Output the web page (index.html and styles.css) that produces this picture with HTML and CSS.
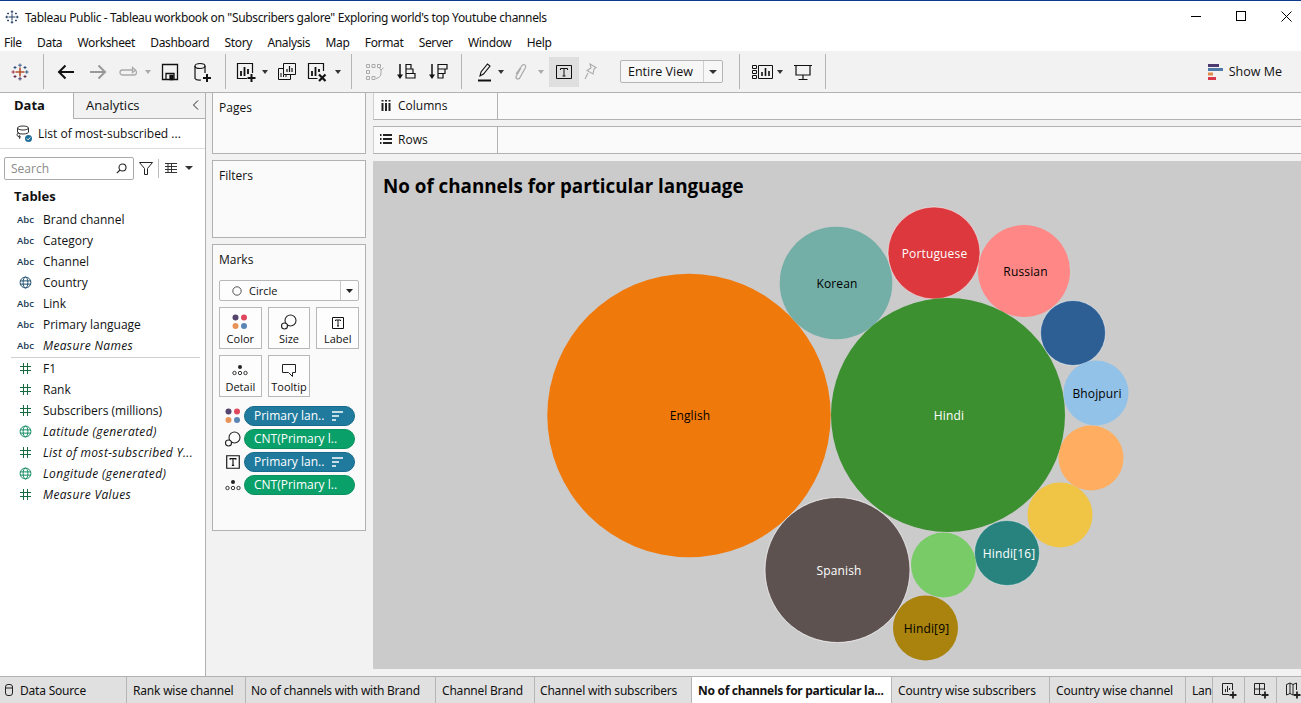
FILE: index.html
```html
<!DOCTYPE html>
<html lang="en">
<head>
<meta charset="utf-8">
<title>Tableau Public</title>
<link rel="stylesheet" href="styles.css">
</head>
<body>
<div class="app">
  <header class="titlebar">
    <svg class="title-logo" width="14" height="16" viewBox="0 0 16 16" fill="none" stroke="#1f3a5f" stroke-width="1.100"><path d="M8 4v8M4 8h8M8 0.500v3M6.500 2h3M8 12.500v3M6.500 14h3M0.500 8h3M2 6.500v3M12.500 8h3M14 6.500v3M3.500 3v2M2.500 4h2M12.500 3v2M11.500 4h2M3.500 11v2M2.500 12h2M12.500 11v2M11.500 12h2"/></svg>
    <span class="title-text">Tableau Public - Tableau workbook on "Subscribers galore" Exploring world's top Youtube channels</span>
    <div class="win-controls">
      <svg width="10" height="10" viewBox="0 0 10 10"><path d="M0 5.500h10" stroke="#000"/></svg>
      <svg width="10" height="10" viewBox="0 0 10 10"><rect x=".5" y=".5" width="9" height="9" fill="none" stroke="#000"/></svg>
      <svg width="11" height="11" viewBox="0 0 11 11"><path d="M.5.500l10 10M10.500.500l-10 10" stroke="#000"/></svg>
    </div>
  </header>
  <nav class="menubar">
    <span>File</span><span>Data</span><span>Worksheet</span><span>Dashboard</span><span>Story</span><span>Analysis</span><span>Map</span><span>Format</span><span>Server</span><span>Window</span><span>Help</span>
  </nav>
  <div class="toolbar">
    <div class="tb-group g-logo">
      <svg width="18" height="18" viewBox="0 0 18 18" fill="none" stroke-width="1"><path d="M9 4.500v9M4.500 9h9" stroke="#b5502d" stroke-width="1.600"/><path d="M9 .5v3.500M7.200 2.200h3.600" stroke="#3f5f8a"/><path d="M9 14v3.500M7.200 15.800h3.600" stroke="#4a3a6a"/><path d="M.5 9H4M2.200 7.200v3.600" stroke="#a03a4f"/><path d="M14 9h3.500M15.800 7.200v3.600" stroke="#2f5f80"/><path d="M4 3v3M2.500 4.500h3M14 3v3M12.500 4.500h3" stroke="#2f4f7a"/><path d="M4 12v3M2.500 13.500h3M14 12v3M12.500 13.500h3" stroke="#6a2f4f"/></svg>
    </div>
    <div class="tb-group g-file">
      <svg class="ico" viewBox="0 0 20 20" fill="none" stroke="#111" stroke-width="2"><path d="M18 10H3M9.500 3.500L3 10l6.500 6.500"/></svg>
      <svg class="ico m12" viewBox="0 0 20 20" fill="none" stroke="#999" stroke-width="2"><path d="M2 10h15M10.500 3.500L17 10l-6.500 6.500"/></svg>
      <svg class="ico m10" viewBox="0 0 20 20" fill="none" stroke="#aaa" stroke-width="1.300"><path d="M15 8H4.500a2.500 2.500 0 0 0 0 5H16a2.500 2.500 0 0 0 1-4.800M14.500 5.500L17.500 8l-3 2.500z"/></svg>
      <svg class="caret m6" viewBox="0 0 8 4"><path d="M1 0h6L4 4z" fill="#aaa"/></svg>
      <svg class="ico m8" viewBox="0 0 20 20" fill="none" stroke="#111" stroke-width="1.300"><path d="M2.500 2.500h15v15h-15zM6 17.500v-6h8v6"/><path d="M10 13.500h3v4h-3z" fill="#111"/></svg>
      <svg class="ico m12" viewBox="0 0 20 20" fill="none" stroke="#111" stroke-width="1.200"><ellipse cx="8" cy="4" rx="5" ry="2.500"/><path d="M3 4v12.500a5 2 0 0 0 6 1.500M13 4v7"/><path d="M11 16h8M15 12v8" stroke-width="2"/></svg>
    </div>
    <div class="tb-group g-sheet">
      <svg class="ico" viewBox="0 0 20 20" fill="none" stroke="#111" stroke-width="1.200"><path d="M11 16.500H1.500v-15h15V11"/><path d="M5 14V9M8.500 14V5M12 12V7" stroke-width="1.800"/><path d="M11.500 16h8M15.500 12v8" stroke-width="2"/></svg>
      <svg class="caret m5" viewBox="0 0 8 4"><path d="M1 0h6L4 4z" fill="#333"/></svg>
      <svg class="ico m8" viewBox="0 0 20 20" fill="none" stroke="#111" stroke-width="1"><path d="M6.500 1.500h12v11h-12z"/><path d="M10 10V7M12.500 10V4M15 10V6" stroke-width="1.200"/><path d="M6.500 6.500H1.500v11h12v-5M4 15v-4M6.500 15v-2M9 15v-2"/></svg>
      <svg class="ico m10" viewBox="0 0 20 20" fill="none" stroke="#111" stroke-width="1.200"><path d="M10.500 16.500h-9v-15h15V9"/><path d="M5 14V9M8.500 14V5M12 10V7" stroke-width="1.800"/><path d="M12 12.500l6.500 6.500M18.500 12.500L12 19" stroke-width="2.200"/></svg>
      <svg class="caret m7" viewBox="0 0 8 4"><path d="M1 0h6L4 4z" fill="#333"/></svg>
    </div>
    <div class="tb-group g-sort">
      <svg class="ico" viewBox="0 0 20 20" fill="none" stroke="#aaa" stroke-width="1"><path d="M1.500 2.500h3v3h-3zM7 2.500h3v3H7zM12.500 2.500h3v3h-3zM1.500 8.500h3v3h-3zM1.500 14.500h3v3h-3zM7 14.500h3v3H7zM16 8v3c0 3-2 5-5 5.500M14 5.500l2 2.500 2.500-2"/></svg>
      <svg class="ico m11" viewBox="0 0 20 20" fill="none" stroke="#111" stroke-width="1.200"><path d="M4 2v13" stroke-width="1.500"/><path d="M1 12.500h6L4 17z" fill="#111" stroke="none"/><path d="M10 2.500h5v4.500h-5zM10 7h7v4.500h-7zM10 11.500h9V16h-9z"/></svg>
      <svg class="ico m12" viewBox="0 0 20 20" fill="none" stroke="#111" stroke-width="1.200"><path d="M4 2v13" stroke-width="1.500"/><path d="M1 12.500h6L4 17z" fill="#111" stroke="none"/><path d="M10 2.500h9v4.500h-9zM10 7h7v4.500h-7zM10 11.500h5V16h-5z"/></svg>
    </div>
    <div class="tb-group g-format">
      <svg class="ico" viewBox="0 0 20 20" fill="none" stroke="#111" stroke-width="1.100"><path d="M5 14l1-4 6.500-8 2.500 2-6.500 8z"/><path d="M3 18.500h13" stroke-width="2"/></svg>
      <svg class="caret m2" viewBox="0 0 8 4"><path d="M1 0h6L4 4z" fill="#333"/></svg>
      <svg class="ico m6" viewBox="0 0 20 20" fill="none" stroke="#aaa" stroke-width="1.200"><path d="M5 12l6-8.500c1.500-2 4.500-.5 3.500 2L9 15.500c-1 2.500-4.500 1.500-4-1L10 6"/></svg>
      <svg class="caret m6" viewBox="0 0 8 4"><path d="M1 0h6L4 4z" fill="#aaa"/></svg>
      <span class="tb-toggle"><svg width="18" height="18" viewBox="0 0 18 18" fill="none"><path d="M1.500 2.500h15v13h-15z" stroke="#111"/><path d="M5.500 7V5.500h7V7M9 5.500v7.500M7.500 13h3" stroke="#111"/></svg></span>
      <svg class="ico m2" viewBox="0 0 20 20" fill="none" stroke="#aaa" stroke-width="1.100"><path d="M9 2l6 3.500-2 1.500-1 5-6-3.500 4-2.500zM7 11l-3 6"/></svg>
    </div>
    <div class="tb-group g-view">
      <div class="fit-select"><span class="fit-label">Entire View</span><span class="fit-arrow"><svg width="8" height="4" viewBox="0 0 8 4"><path d="M0 0h8L4 4z" fill="#333"/></svg></span></div>
    </div>
    <div class="tb-group g-show">
      <svg class="ico-wide" viewBox="0 0 21 16" fill="none" stroke="#111" stroke-width="1"><path d="M.5 1.500h4v3h-4zM.5 6.500h4v3h-4zM.5 11.500h4v3h-4zM6.500 1.500h14v13h-14z"/><path d="M10 12V8M13.500 12V4M17 12V7" stroke-width="1.600"/></svg>
      <svg class="caret m3" viewBox="0 0 8 4"><path d="M1 0h6L4 4z" fill="#333"/></svg>
      <svg class="ico m9" viewBox="0 0 20 20" fill="none" stroke="#111" stroke-width="1.200"><path d="M1 3.500h18M3 3.500v9.500h14V3.500M10 13v4M5.500 17.500h9"/></svg>
    </div>
    <div class="showme">
      <svg width="15" height="16" viewBox="0 0 15 16"><rect y="0" width="11" height="3" fill="#4c3a6e"/><rect y="4" width="15" height="3" fill="#4f7aa8"/><rect y="8.500" width="5" height="3" fill="#e08a4a"/><rect y="13" width="8" height="3" fill="#d9384a"/></svg>
      <span>Show Me</span>
    </div>
  </div>

  <main class="workspace">
    <aside class="datapane">
      <div class="pane-tabs">
        <div class="pane-tab active">Data</div>
        <div class="pane-tab">Analytics<svg class="collapse" width="7" height="10" viewBox="0 0 7 10"><path d="M6 .5L1.500 5 6 9.500" fill="none" stroke="#222"/></svg></div>
      </div>
      <div class="source">
        <svg width="17" height="18" viewBox="0 0 17 18" fill="none" stroke="#333" stroke-width="1"><ellipse cx="7" cy="3" rx="5.500" ry="2"/><path d="M1.500 3v4c0 1 2 2 5.500 2s5.500-1 5.500-2V3M3 7.500C1.500 8 1 9 1 10c0 1 1.500 1.800 4 2M4 9.500c-1 .5-1 4 0 4.500"/><circle cx="12.500" cy="13.500" r="3.500" fill="#1f6f99" stroke="none"/><path d="M10.800 13.500l1.300 1.300 2.200-2.400" stroke="#fff"/></svg>
        <span>List of most-subscribed ...</span>
      </div>
      <div class="search-row">
        <div class="search"><span>Search</span><svg width="11" height="11" viewBox="0 0 11 11" fill="none" stroke="#222" stroke-width="1.100"><circle cx="6.500" cy="4.500" r="3.500"/><path d="M4 7L.8 10.200"/></svg></div>
        <svg width="14" height="13" viewBox="0 0 14 13" fill="none" stroke="#222"><path d="M.5.500h13L8.500 6.500v6h-3v-6z"/></svg>
        <i class="search-sep"></i>
        <svg width="12" height="10" viewBox="0 0 12 10" fill="none" stroke="#333"><path d="M0 .5h12M0 3.500h12M0 6.500h12M0 9.500h12M3 0v10M6.500 0v10"/></svg>
        <svg class="list-caret" width="8" height="4" viewBox="0 0 8 4"><path d="M0 0h8L4 4z" fill="#333"/></svg>
      </div>
      <div class="tables-head">Tables</div>
      <ul class="fields">
        <li><b class="abc">Abc</b><span>Brand channel</span></li>
        <li><b class="abc">Abc</b><span>Category</span></li>
        <li><b class="abc">Abc</b><span>Channel</span></li>
        <li><svg class="globe navy" viewBox="0 0 12 12"><circle cx="6" cy="6" r="5"/><ellipse cx="6" cy="6" rx="2.200" ry="5"/><path d="M1 4.500h10M1 7.500h10"/></svg><span>Country</span></li>
        <li><b class="abc">Abc</b><span>Link</span></li>
        <li><b class="abc">Abc</b><span>Primary language</span></li>
        <li><b class="abc">Abc</b><em>Measure Names</em></li>
        <li class="divider" aria-hidden="true"></li>
        <li><svg class="hash" viewBox="0 0 11 11"><path d="M3.500 0v11M7.500 0v11M0 3.500h11M0 7.500h11"/></svg><span>F1</span></li>
        <li><svg class="hash" viewBox="0 0 11 11"><path d="M3.500 0v11M7.500 0v11M0 3.500h11M0 7.500h11"/></svg><span>Rank</span></li>
        <li><svg class="hash" viewBox="0 0 11 11"><path d="M3.500 0v11M7.500 0v11M0 3.500h11M0 7.500h11"/></svg><span>Subscribers (millions)</span></li>
        <li><svg class="globe green" viewBox="0 0 12 12"><circle cx="6" cy="6" r="5"/><ellipse cx="6" cy="6" rx="2.200" ry="5"/><path d="M1 4.500h10M1 7.500h10"/></svg><em>Latitude (generated)</em></li>
        <li><svg class="hash" viewBox="0 0 11 11"><path d="M3.500 0v11M7.500 0v11M0 3.500h11M0 7.500h11"/></svg><em>List of most-subscribed Y...</em></li>
        <li><svg class="globe green" viewBox="0 0 12 12"><circle cx="6" cy="6" r="5"/><ellipse cx="6" cy="6" rx="2.200" ry="5"/><path d="M1 4.500h10M1 7.500h10"/></svg><em>Longitude (generated)</em></li>
        <li><svg class="hash" viewBox="0 0 11 11"><path d="M3.500 0v11M7.500 0v11M0 3.500h11M0 7.500h11"/></svg><em>Measure Values</em></li>
      </ul>
    </aside>

    <section class="cards">
      <div class="card pages"><h3>Pages</h3></div>
      <div class="card filters"><h3>Filters</h3></div>
      <div class="card marks">
        <h3>Marks</h3>
        <div class="mark-type">
          <svg width="10" height="10" viewBox="0 0 10 10"><circle cx="5" cy="5" r="4.200" fill="none" stroke="#555"/></svg>
          <span class="mark-type-name">Circle</span>
          <span class="mark-type-arrow"><svg width="7" height="4" viewBox="0 0 7 4"><path d="M0 0h7L3.500 4z" fill="#222"/></svg></span>
        </div>
        <div class="mark-grid">
          <div class="mark-btn"><svg width="16" height="16" viewBox="0 0 16 16"><circle cx="3.500" cy="3.500" r="3" fill="#55446e"/><circle cx="12" cy="3.500" r="3" fill="#e0475e"/><circle cx="3.500" cy="12" r="3" fill="#e8935a"/><circle cx="12" cy="12" r="3" fill="#5b85b5"/></svg><span>Color</span></div>
          <div class="mark-btn"><svg width="16" height="16" viewBox="0 0 16 16" fill="none" stroke="#222" stroke-width="1.100"><circle cx="9.500" cy="6.500" r="5.500"/><circle cx="3.500" cy="12" r="3" fill="#fafafa"/></svg><span>Size</span></div>
          <div class="mark-btn"><svg width="14" height="14" viewBox="0 0 14 14" fill="none" stroke="#111"><path d="M1.500 1.500h11v11h-11z"/><path d="M4.500 5V4h5v1M7 4v6M6 10h2"/></svg><span>Label</span></div>
          <div class="mark-btn"><svg width="16" height="16" viewBox="0 0 16 16" fill="none" stroke="#222" stroke-width=".9"><circle cx="8" cy="5" r="2" fill="#222" stroke="none"/><circle cx="2.500" cy="11" r="1.700"/><circle cx="8" cy="11" r="1.700"/><circle cx="13.500" cy="11" r="1.700"/></svg><span>Detail</span></div>
          <div class="mark-btn"><svg width="16" height="16" viewBox="0 0 16 16" fill="none" stroke="#222"><path d="M1.500 2.500h13v8h-3v4l-4-4h-6z"/></svg><span>Tooltip</span></div>
        </div>
        <div class="pills">
          <div class="pill-row">
            <svg width="16" height="16" viewBox="0 0 16 16"><circle cx="3.500" cy="3.500" r="3" fill="#55446e"/><circle cx="12" cy="3.500" r="3" fill="#e0475e"/><circle cx="3.500" cy="12" r="3" fill="#e8935a"/><circle cx="12" cy="12" r="3" fill="#5b85b5"/></svg>
            <div class="pill blue"><span>Primary lan..</span><svg class="sort" width="11" height="10" viewBox="0 0 11 10"><path d="M0 1h11M0 5h7M0 9h4" stroke="#fff" stroke-width="1.600"/></svg></div>
          </div>
          <div class="pill-row">
            <svg width="16" height="16" viewBox="0 0 16 16" fill="none" stroke="#222" stroke-width="1.100"><circle cx="9.500" cy="6.500" r="5.500"/><circle cx="3.500" cy="12" r="3" fill="#fafafa"/></svg>
            <div class="pill green-pill"><span>CNT(Primary l..</span></div>
          </div>
          <div class="pill-row">
            <svg width="16" height="16" viewBox="0 0 14 14" fill="none" stroke="#111"><path d="M1.500 1.500h11v11h-11z"/><path d="M4.500 5V4h5v1M7 4v6M6 10h2"/></svg>
            <div class="pill blue"><span>Primary lan..</span><svg class="sort" width="11" height="10" viewBox="0 0 11 10"><path d="M0 1h11M0 5h7M0 9h4" stroke="#fff" stroke-width="1.600"/></svg></div>
          </div>
          <div class="pill-row">
            <svg width="16" height="16" viewBox="0 0 16 16" fill="none" stroke="#222" stroke-width=".9"><circle cx="8" cy="5" r="2" fill="#222" stroke="none"/><circle cx="2.500" cy="11" r="1.700"/><circle cx="8" cy="11" r="1.700"/><circle cx="13.500" cy="11" r="1.700"/></svg>
            <div class="pill green-pill"><span>CNT(Primary l..</span></div>
          </div>
        </div>
      </div>
    </section>

    <section class="viewarea">
      <div class="shelf">
        <div class="shelf-head"><svg width="12" height="11" viewBox="-1 0 12 11"><path d="M1.500 3v8M5 3v8M8.500 3v8" stroke="#222" stroke-width="2"/><path d="M1.500 0v1.500M5 0v1.500M8.500 0v1.500" stroke="#222" stroke-width="2"/></svg><span>Columns</span></div>
      </div>
      <div class="shelf">
        <div class="shelf-head"><svg width="12" height="10" viewBox="0 0 12 10"><path d="M3 1h9M3 5h9M3 9h9M0 1h1.500M0 5h1.500M0 9h1.500" stroke="#222" stroke-width="1.800"/></svg><span>Rows</span></div>
      </div>
      <div class="canvas">
        <svg class="viz" width="928" height="508" viewBox="373 161 928 508">
          <text class="viz-title" x="383" y="193">No of channels for particular language</text>
          <circle cx="689" cy="415.500" r="141.700" fill="#f0790c"/>
          <circle cx="836" cy="283" r="56.300" fill="#73aea7"/>
          <circle cx="934" cy="253" r="46" fill="#dc383d" stroke="#fff" stroke-opacity=".5"/>
          <circle cx="1024" cy="271" r="46" fill="#ff8886"/>
          <circle cx="948" cy="415" r="117" fill="#3c9030"/>
          <circle cx="1073" cy="333" r="32.500" fill="#2d5f95" stroke="#fff" stroke-opacity=".5"/>
          <circle cx="1096" cy="393" r="32.500" fill="#93c2e8"/>
          <circle cx="1091" cy="458" r="32.500" fill="#ffae61"/>
          <circle cx="1060" cy="515" r="32.500" fill="#f0c445"/>
          <circle cx="1007" cy="553" r="32.500" fill="#28837f" stroke="#fff" stroke-opacity=".4"/>
          <circle cx="943.500" cy="565" r="32.500" fill="#78cb66"/>
          <circle cx="837.500" cy="570" r="72.500" fill="#5e5251" stroke="#fff" stroke-opacity=".7"/>
          <circle cx="925.500" cy="628" r="32.500" fill="#a9830d"/>
          <text class="lbl" x="690" y="420">English</text>
          <text class="lbl" x="837" y="288">Korean</text>
          <text class="lbl white" x="934.500" y="258">Portuguese</text>
          <text class="lbl" x="1025.500" y="276">Russian</text>
          <text class="lbl white" x="949" y="420">Hindi</text>
          <text class="lbl" x="1097" y="398">Bhojpuri</text>
          <text class="lbl white" x="1009" y="558">Hindi[16]</text>
          <text class="lbl white" x="839" y="575">Spanish</text>
          <text class="lbl" x="926.500" y="633">Hindi[9]</text>
        </svg>
      </div>
    </section>
  </main>

  <footer class="tabs">
    <div class="tab t-source"><svg width="8" height="12" viewBox="0 0 8 12" fill="none" stroke="#222"><rect x=".5" y=".5" width="7" height="11" rx="2.500"/><path d="M.5 4h7"/></svg><span>Data Source</span></div>
    <div class="tab t-rank"><span>Rank wise channel</span></div>
    <div class="tab t-brand"><span>No of channels with with Brand</span></div>
    <div class="tab t-cbrand"><span>Channel Brand</span></div>
    <div class="tab t-csub"><span>Channel with subscribers</span></div>
    <div class="tab t-active"><span>No of channels for particular la...</span></div>
    <div class="tab t-csubs"><span>Country wise subscribers</span></div>
    <div class="tab t-cchan"><span>Country wise channel</span></div>
    <div class="tab t-lang"><span>Language</span></div>
    <div class="tab t-icon"><svg width="18" height="18" viewBox="0 0 18 18" fill="none" stroke="#222"><path d="M9 13.500H2.500v-11h10V9"/><path d="M5.500 11V8M7.500 11V5M9.500 9V7"/><path d="M9.500 14h7M13 10.500v7" stroke-width="1.800"/></svg></div>
    <div class="tab t-icon"><svg width="18" height="18" viewBox="0 0 18 18" fill="none" stroke="#222"><path d="M9 13.500H2.500v-11h10V9M2.500 8h10M7.500 2.500v11"/><path d="M9.500 14h7M13 10.500v7" stroke-width="1.800"/></svg></div>
    <div class="tab t-icon"><svg width="18" height="18" viewBox="0 0 18 18" fill="none" stroke="#222"><path d="M9 14l-3-1.500L2.500 14V3.500L6 2l3 1.500L12.500 2v7M6 2v10.500M9 3.500V14"/><path d="M9.500 14h7M13 10.500v7" stroke-width="1.800"/></svg></div>
  </footer>
</div>
</body>
</html>
```

FILE: styles.css
```css
* { box-sizing: border-box; }
html, body { margin: 0; padding: 0; }
body { font-family: "Open Sans", "Noto Sans", sans-serif; font-size: 12px; color: #111; background: #fff; overflow: hidden; }
.app { width: 1301px; height: 703px; display: flex; flex-direction: column; overflow: hidden; }

.titlebar { height: 33px; flex: none; border-top: 1px solid #0b3a8f; display: flex; align-items: center; padding-left: 5px; background: #fff; }
.title-logo { margin-right: 6px; }
.title-text { font-family: "Noto Sans", sans-serif; font-size: 12px; letter-spacing: -.35px; flex: 1; white-space: nowrap; }
.win-controls { display: flex; align-items: center; gap: 35px; padding-right: 9px; margin-top: -2px; }

.menubar { height: 18px; flex: none; display: flex; align-items: center; gap: 15.300px; padding-left: 4px; background: #fff; font-family: "Noto Sans", sans-serif; letter-spacing: -.35px; }

.toolbar { height: 42px; flex: none; display: flex; align-items: center; background: #f2f2f2; border-bottom: 1px solid #b1b1b1; }
.tb-group { height: 35px; display: flex; align-items: center; border-right: 1px solid #b5b5b5; flex: none; }
.g-logo { width: 44px; padding-left: 11px; }
.g-file { width: 182px; padding-left: 12px; }
.g-sheet { width: 126px; padding-left: 10px; }
.g-sort { width: 110px; padding-left: 13px; }
.g-format { width: 158px; padding-left: 13px; border-right: 0; }
.g-view { width: 120px; justify-content: flex-end; padding-right: 16px; }
.g-show { width: 86px; padding-left: 12px; }
.ico { width: 20px; height: 20px; flex: none; }
.ico-wide { width: 21px; height: 16px; flex: none; }
.caret { width: 8px; height: 4px; flex: none; }
.m2 { margin-left: 2px; }
.m3 { margin-left: 3px; }
.m5 { margin-left: 5px; }
.m6 { margin-left: 6px; }
.m7 { margin-left: 7px; }
.m8 { margin-left: 8px; }
.m9 { margin-left: 9px; }
.m10 { margin-left: 10px; }
.m11 { margin-left: 11px; }
.m12 { margin-left: 12px; }
.tb-toggle { width: 30px; height: 30px; background: #dfdfdf; display: flex; align-items: center; justify-content: center; margin-left: 4px; flex: none; }
.fit-select { width: 104px; height: 23px; display: flex; border: 1px solid #b5b5b5; border-radius: 2px; background: #f7f7f7; }
.fit-label { flex: 1; padding-left: 7px; line-height: 21px; font-size: 12.500px; }
.fit-arrow { width: 19px; border-left: 1px solid #cfcfcf; display: flex; align-items: center; justify-content: center; }
.showme { margin-left: auto; display: flex; align-items: center; gap: 6px; padding-right: 19px; font-size: 12.500px; }

.workspace { flex: 1; min-height: 0; display: grid; grid-template-columns: 206px 167px 1fr; background: #f2f2f2; }

.datapane { background: #fff; border-right: 1px solid #b1b1b1; display: flex; flex-direction: column; }
.pane-tabs { display: grid; grid-template-columns: 73px 1fr; height: 26px; flex: none; }
.pane-tab { background: #f2f2f2; border-left: 1px solid #b1b1b1; border-bottom: 1px solid #b1b1b1; padding-left: 12px; line-height: 24px; font-size: 13px; position: relative; }
.pane-tab.active { background: #fff; border: 0; padding-left: 14px; font-weight: 700; }
.collapse { position: absolute; right: 6px; top: 7px; }
.source { height: 30px; flex: none; border-bottom: 1px solid #ddd; display: flex; align-items: center; gap: 5px; padding-left: 16px; }
.search-row { display: flex; align-items: center; height: 22px; margin-top: 8px; padding-left: 4px; flex: none; }
.search { width: 130px; height: 23px; border: 1px solid #aaa; border-radius: 2px; display: flex; align-items: center; justify-content: space-between; padding: 0 6px; color: #8a8a8a; margin-right: 5px; }
.search-sep { width: 1px; height: 19px; background: #bbb; margin: 0 6px 0 5px; }
.list-caret { margin-left: 8px; }
.tables-head { font-weight: 700; font-size: 13px; padding-left: 14px; margin-top: 6px; height: 24px; line-height: 22px; flex: none; }
.fields { list-style: none; margin: 0; padding: 0; font-size: 12px; }
.fields li { height: 21px; display: flex; align-items: center; padding-left: 17px; white-space: nowrap; }
.fields li.divider { height: 2px; margin: 0 5px 0 11px; padding: 0; background: linear-gradient(transparent 1px, #cfcfcf 1px); }
.fields em { letter-spacing: .35px; }
.abc { width: 26px; font-size: 9.500px; font-weight: 600; color: #1b3a57; flex: none; }
.globe { width: 13px; height: 13px; margin: 0 11px 0 2px; fill: none; stroke-width: .9; flex: none; }
.globe.navy { stroke: #1d4a6b; }
.globe.green { stroke: #0f8a5f; }
.hash { width: 11px; height: 11px; margin: 0 12px 0 3px; fill: none; stroke: #17693f; flex: none; }

.cards { padding: 0 7px 0 6px; display: flex; flex-direction: column; gap: 6px; }
.card { background: #fafafa; border: 1px solid #b1b1b1; padding: 0 6px; flex: none; }
.card h3 { margin: 0; font-weight: 400; font-size: 12px; line-height: 16px; }
.pages { height: 61px; border-top: 0; padding-top: 7px; }
.filters { height: 78px; padding-top: 7px; }
.marks { height: 287px; padding-top: 7px; }
.mark-type { margin-top: 12px; width: 140px; height: 21px; border: 1px solid #b8b8b8; border-radius: 2px; display: flex; align-items: center; padding-left: 12px; background: #fdfdfd; font-size: 11px; }
.mark-type-name { flex: 1; padding-left: 7px; }
.mark-type-arrow { width: 18px; height: 19px; border-left: 1px solid #c8c8c8; display: flex; align-items: center; justify-content: center; }
.mark-grid { width: 140px; margin-top: 6px; display: grid; grid-template-columns: repeat(3, 1fr); grid-auto-rows: 42px; gap: 6px; }
.mark-btn { border: 1px solid #b8b8b8; background: #fdfdfd; display: flex; flex-direction: column; align-items: center; justify-content: flex-end; font-size: 11px; line-height: 15px; padding-bottom: 2px; gap: 1px; }
.pills { margin-top: 9px; display: flex; flex-direction: column; gap: 3px; }
.pill-row { display: flex; align-items: center; height: 20px; padding-left: 6px; gap: 3px; }
.pill-row > svg { flex: none; }
.pill { width: 111px; height: 20px; border-radius: 10px; color: #fff; font-size: 12px; line-height: 18px; padding: 0 11px 0 9px; display: flex; align-items: center; justify-content: space-between; white-space: nowrap; }
.pill.blue { background: #1f7a9e; border: 1px solid #176a8b; }
.pill.green-pill { background: #0aa06a; border: 1px solid #0a915f; }

.viewarea { display: flex; flex-direction: column; gap: 6px; min-width: 0; }
.shelf { height: 27px; flex: none; background: #fafafa; border-bottom: 1px solid #b1b1b1; border-left: 1px solid #d0d0d0; display: flex; }
.shelf + .shelf { height: 28px; border-top: 1px solid #b1b1b1; }
.shelf-head { width: 124px; border-right: 1px solid #b1b1b1; display: flex; align-items: center; gap: 6px; padding: 0 0 2px 6px; }
.canvas { height: 508px; flex: none; background: #cbcbcb; margin-top: 1px; }
.viz { display: block; }
.viz-title { font-family: "Open Sans", sans-serif; font-weight: 700; font-size: 18.800px; fill: #000; }
.lbl { font-family: "Open Sans", sans-serif; font-size: 12px; font-weight: 500; fill: #000; text-anchor: middle; letter-spacing: .15px; }
.lbl.white { fill: #fff; }

.tabs { height: 27px; flex: none; display: flex; background: #e0e0e0; border-top: 1px solid #b1b1b1; overflow: hidden; font-family: "Noto Sans", sans-serif; letter-spacing: -.2px; }
.tab { flex: none; height: 100%; border-right: 1px solid #b5b5b5; display: flex; align-items: center; padding-left: 6px; white-space: nowrap; overflow: hidden; }
.t-source { width: 127px; gap: 7px; padding-left: 5px; }
.t-rank { width: 119px; }
.t-brand { width: 190px; padding-left: 5px; letter-spacing: -.25px; }
.t-cbrand { width: 99px; }
.t-csub { width: 157px; padding-left: 5px; }
.t-active { width: 200px; background: #fff; font-weight: 700; letter-spacing: -.3px; }
.t-csubs { width: 158px; letter-spacing: -.15px; }
.t-cchan { width: 136px; }
.t-lang { width: 27px; }
.t-icon { width: 32px; padding-left: 7px; }
```
